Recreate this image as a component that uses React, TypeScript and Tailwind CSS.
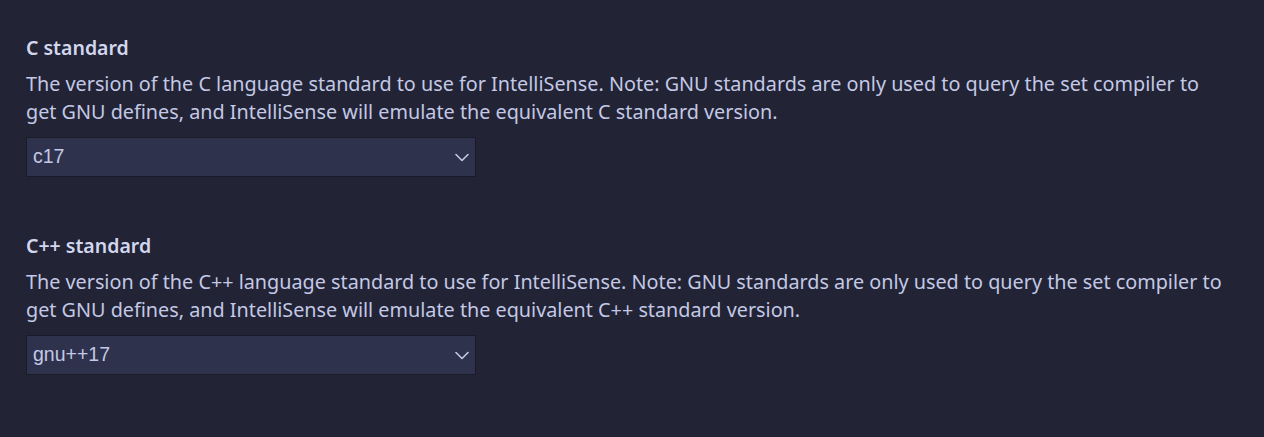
const settings = [
  {
    title: 'C standard',
    description:
      'The version of the C language standard to use for IntelliSense. Note: GNU standards are only used to query the set compiler to get GNU defines, and IntelliSense will emulate the equivalent C standard version.',
    value: 'c17',
  },
  {
    title: 'C++ standard',
    description:
      'The version of the C++ language standard to use for IntelliSense. Note: GNU standards are only used to query the set compiler to get GNU defines, and IntelliSense will emulate the equivalent C++ standard version.',
    value: 'gnu++17',
  },
];

const Chevron = () => (
  <svg width="14" height="9" viewBox="0 0 14 9" fill="none" className="mr-[6px]">
    <path d="M1 1.5l6 6 6-6" stroke="#c3c9e6" strokeWidth="1.6" strokeLinecap="round" strokeLinejoin="round" />
  </svg>
);

const App = () => {
  return (
    <div className="min-h-screen bg-[#222334] pt-[36px] pl-[26px] pr-[30px] font-['Noto_Sans',sans-serif]">
      {settings.map((s) => (
        <div key={s.title} className="mb-[57px]">
          <h3 className="text-[19.5px] leading-[24px] font-semibold text-[#d2d7f0]">{s.title}</h3>
          <p className="mt-[10px] text-[19.8px] leading-[28px] text-[#c3c9e6] max-w-[1197px]">{s.description}</p>
          <div className="mt-[11px] w-[450px] h-[40px] bg-[#2f324d] border border-[#1a1b29] flex items-center justify-between pl-[6px]">
            <span className="font-['Liberation_Sans',sans-serif] text-[19.5px] text-[#c3c9e6]">{s.value}</span>
            <Chevron />
          </div>
        </div>
      ))}
    </div>
  );
};

export default App;
